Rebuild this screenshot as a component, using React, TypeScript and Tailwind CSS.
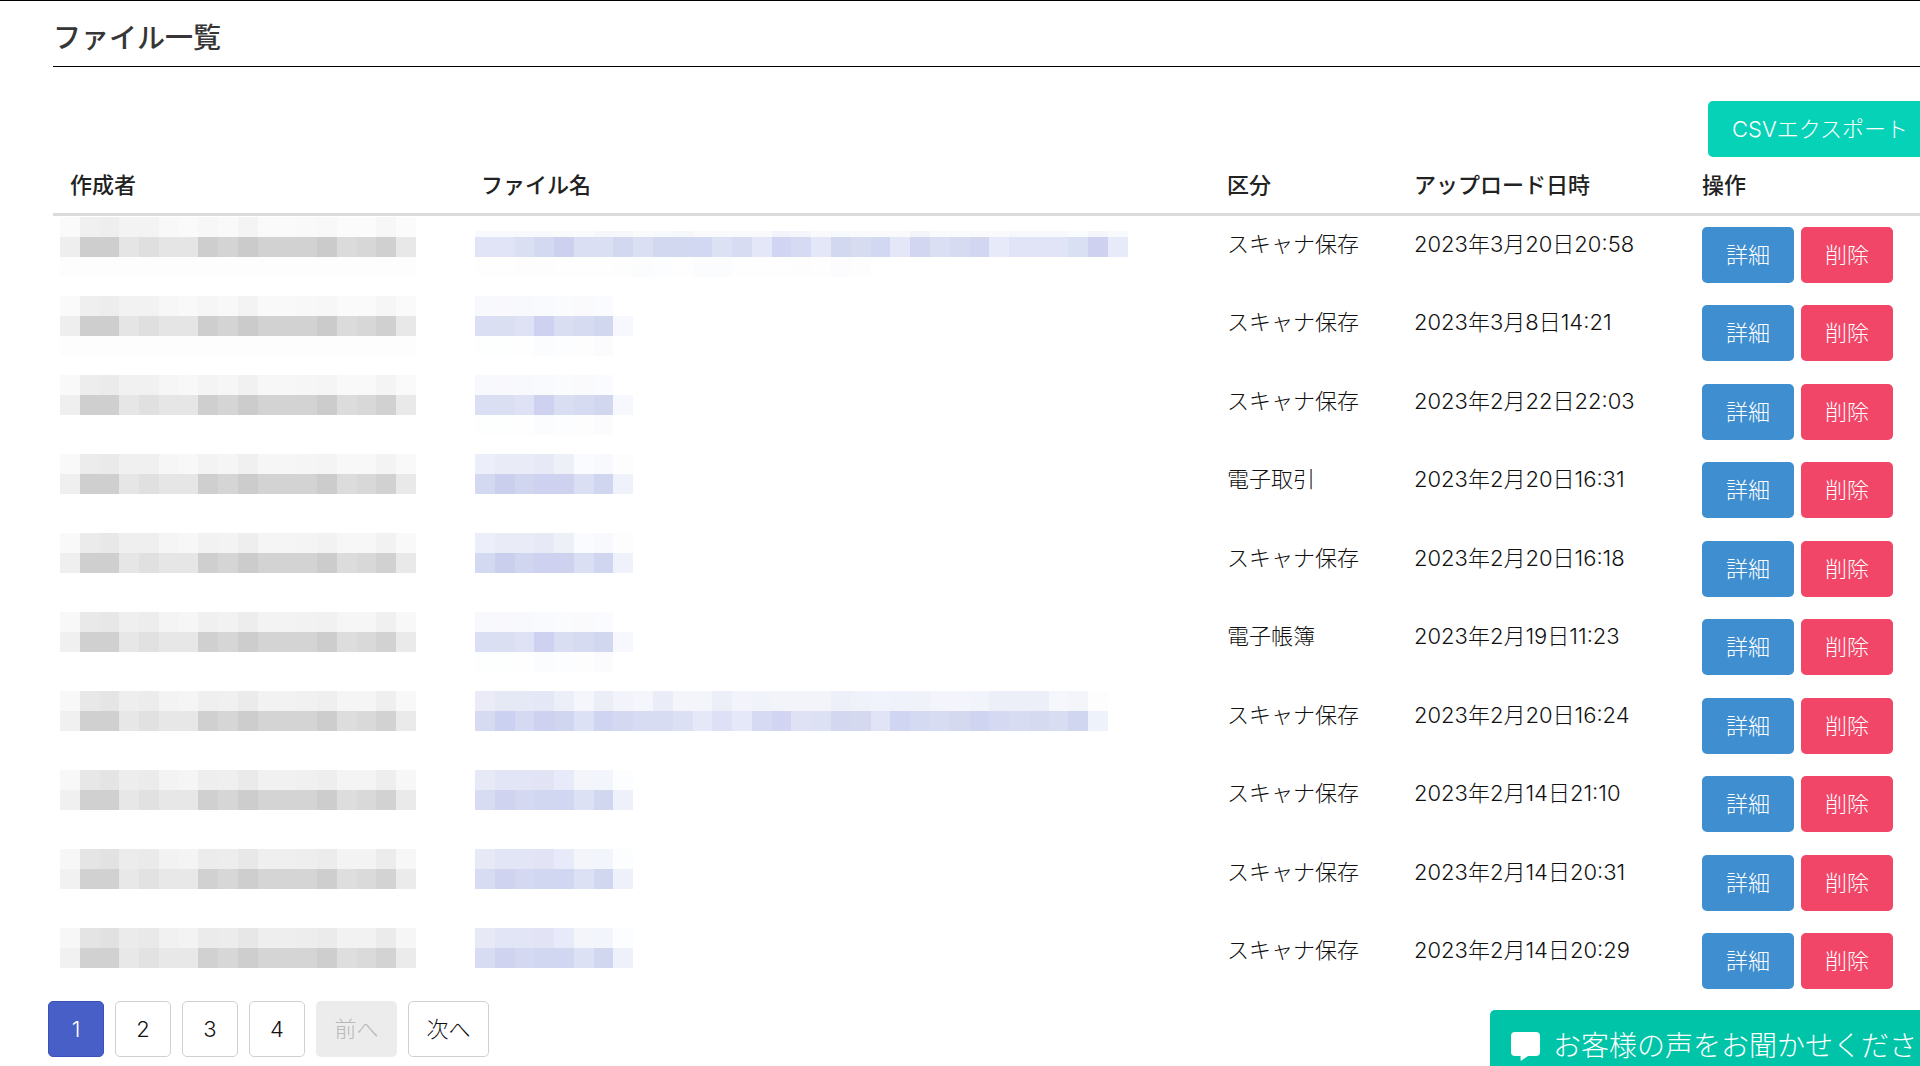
import React from 'react';

type FileRow = {
  kind: string;
  uploadedAt: string;
  name: MaskedText;
};

// Colours of the blocks that hide a value, one list per band of the mosaic
type MaskedText = {
  top: string[];
  main: string[];
  bottom?: string[];
  thinTop?: boolean;
};

const BLOCK_WIDTH = 19.78;
const BLOCK_HEIGHT = 20;

const split = (colors: string) => colors.split(' ').map((c) => '#' + c);

const CREATOR_MAIN = [238, 206, 206, 229, 223, 229, 229, 206, 212, 203, 210, 210, 210, 203, 219, 215, 208, 232];
const CREATOR_TOP_FIRST = [250, 240, 238, 243, 243, 248, 250, 247, 249, 244, 250, 250, 249, 248, 251, 251, 247, 251];
const CREATOR_TOP_LAST = [247, 228, 225, 235, 233, 241, 243, 235, 236, 231, 238, 238, 237, 235, 242, 242, 235, 246];

const LONG_NAME_A: MaskedText = {
  thinTop: true,
  top: split('f8f9fd f8f9fd f8f9fd f8f9fd fafafd fafafd f6f7fb f6f7fb fafafd f8f9fd f6f7fb fafafd fafafd f8f9fb fafafd f3f4fb f5f6fb fafafd f8f9fb fafafd fafafd fafafd f3f4fa fafafd fafafd fafafd fafafd f7f8fb f7f8fb f7f8fb fafbfd f5f6fb f8f9fd'),
  main: split(
    'e0e4f6 e0e4f6 dadff2 d4d9f2 cdd1ef dadff3 dadff3 d3d8f1 dadff3 d3d8f1 d3d8f1 d3d8f2 dce1f4 d7dcf2 e4e7f8 d1d5f1 d6daf2 e4e7f7 d3d8f1 d7dcf1 d3d8f2 e4e7f7 d2d6f1 dadff3 d6dbf1 d2d6f1 e7eaf8 e0e4f6 e0e4f6 e0e4f6 dae0f3 ced2f0 e7eaf8'
  ),
  bottom: split('fefefe fefefe fdfdfe fdfdfe fefefe fefefe fefefe fdfdfe fbfcfe fcfdfe fefefe fbfcfe fbfcfe fefefe fefefe fefefe fdfdfe fefefe fcfcfe fdfdfe'),
};

const LONG_NAME_B: MaskedText = {
  top: split(
    'eaebf7 e5e8f5 e5e8f5 e4e7f5 edeff8 f5f6fb ebeef7 f3f4fb f5f6fb eaedf8 f4f5fa f4f5fa eceef8 f3f4fb f1f3fa f2f4fa f2f4fa f2f4fa eef0f9 f0f2fa f0f3fb eff2fa f0f2fa f4f5fc f4f5fc f2f4fb eceef8 eceef8 eceef8 f6f7fd f4f5fb fdfdfe'
  ),
  main: split(
    'd7dbf1 cbd1f0 d5d9f1 ced2f0 d0d5f0 dde1f5 cfd4f0 d4d8f1 d8dcf2 d8dcf2 dce0f4 e5e8f6 dee1f5 e5e8f8 d6daf2 d1d5f2 dfe2f5 dde1f4 d3d7f0 d5d9f0 e0e4f6 d0d5f1 d5daf3 d8dcf3 d5d9f0 cfd4f0 d5d9f1 d8dcf3 d6daf1 d9ddf2 d0d5f0 eef2fa'
  ),
};

const SHORT_NAME_A: MaskedText = {
  top: split('f8f9fd f9f9fd f8f9fd f9fafd fafbfd fafafd fafbfe'),
  main: split('dadff3 dadff2 dfe2f5 ced2f0 dadef2 d6dbf1 d2d7f0 f7f8fd'),
  bottom: split('fdfefe fdfefe fefefe fbfcfe fcfdfe fdfdfe fbfbfe'),
};

const SHORT_NAME_B: MaskedText = {
  top: split('eceff9 e9ecf7 e9ecf7 e7eaf6 eef0f8 fafbfe f8f9fd fdfdfe'),
  main: split('d3d9f1 c9cfed d1d6f0 ced1f0 ced2ef dbdff4 d0d6f0 eff1fb'),
};

const SHORT_NAME_C: MaskedText = {
  top: split('e7e9f6 e2e5f5 e2e5f5 e2e4f5 e7eaf8 f4f5fb f2f5fc fcfdfe'),
  main: split('d8dcf2 cfd3f0 d5d8f1 d1d6f1 d1d6f1 dce1f4 d2d7f0 eff1fa'),
};

const FILES: FileRow[] = [
  { kind: 'スキャナ保存', uploadedAt: '2023年3月20日20:58', name: LONG_NAME_A },
  { kind: 'スキャナ保存', uploadedAt: '2023年3月8日14:21', name: SHORT_NAME_A },
  { kind: 'スキャナ保存', uploadedAt: '2023年2月22日22:03', name: SHORT_NAME_A },
  { kind: '電子取引', uploadedAt: '2023年2月20日16:31', name: SHORT_NAME_B },
  { kind: 'スキャナ保存', uploadedAt: '2023年2月20日16:18', name: SHORT_NAME_B },
  { kind: '電子帳簿', uploadedAt: '2023年2月19日11:23', name: SHORT_NAME_A },
  { kind: 'スキャナ保存', uploadedAt: '2023年2月20日16:24', name: LONG_NAME_B },
  { kind: 'スキャナ保存', uploadedAt: '2023年2月14日21:10', name: SHORT_NAME_C },
  { kind: 'スキャナ保存', uploadedAt: '2023年2月14日20:31', name: SHORT_NAME_C },
  { kind: 'スキャナ保存', uploadedAt: '2023年2月14日20:29', name: SHORT_NAME_C },
];

function creatorMask(index: number): MaskedText {
  const t = index / (FILES.length - 1);
  const gray = (v: number) => `rgb(${v}, ${v}, ${v})`;
  return {
    top: CREATOR_TOP_FIRST.map((v, i) => gray(Math.round(v + (CREATOR_TOP_LAST[i] - v) * t))),
    main: CREATOR_MAIN.map((v) => gray(Math.round(v + 3 * t))),
    bottom: index < 2 ? CREATOR_MAIN.map(() => gray(253)) : undefined,
  };
}

function Mosaic({ mask, index, label }: { mask: MaskedText; index: number; label: string }) {
  const shift = Math.round(index / 2);
  const bands = [
    { colors: mask.top, y: mask.thinTop ? 14 : 0, height: mask.thinTop ? 6 : BLOCK_HEIGHT },
    { colors: mask.main, y: BLOCK_HEIGHT, height: BLOCK_HEIGHT },
    { colors: mask.bottom ?? [], y: BLOCK_HEIGHT * 2, height: BLOCK_HEIGHT },
  ];
  return (
    <svg
      role="img"
      aria-label={label}
      width={mask.main.length * BLOCK_WIDTH}
      height={66}
      shapeRendering="crispEdges"
      className="block"
    >
      {bands.map((band, b) =>
        band.colors.map((fill, i) => (
          <rect
            key={`${b}-${i}`}
            x={i * BLOCK_WIDTH}
            y={band.y + shift}
            width={BLOCK_WIDTH}
            height={band.height}
            fill={fill}
          />
        ))
      )}
    </svg>
  );
}

function FileTable() {
  return (
    <table className="w-full table-fixed border-separate border-spacing-0 text-left">
      <colgroup>
        <col className="w-[411px]" />
        <col />
        <col className="w-[187px]" />
        <col className="w-[288px]" />
        <col className="w-[235px]" />
      </colgroup>
      <thead>
        <tr>
          {['作成者', 'ファイル名', '区分', 'アップロード日時', '操作'].map((title) => (
            <th
              key={title}
              scope="col"
              className="border-b-3 border-[#dbdbdb] px-[17px] pt-3 pb-[11px] font-medium text-[#222]"
            >
              {title}
            </th>
          ))}
        </tr>
      </thead>
      <tbody>
        {FILES.map((file, i) => (
          <tr key={i} className="align-top odd:h-[78px] even:h-[79px]">
            <td className="pt-px pl-[7px]">
              <Mosaic mask={creatorMask(i)} index={i} label="作成者" />
            </td>
            <td className="pt-px pl-[11px]">
              <Mosaic mask={file.name} index={i} label="ファイル名" />
            </td>
            <td className="px-[17px] pt-3 whitespace-nowrap">{file.kind}</td>
            <td className="px-[17px] pt-3 whitespace-nowrap">{file.uploadedAt}</td>
            <td className="pt-[11px] pl-[17px]">
              <div className="flex gap-[7px]">
                <button type="button" className="h-14 w-[92px] rounded-[5px] bg-[#3e8ed0] text-white">
                  詳細
                </button>
                <button type="button" className="h-14 w-[92px] rounded-[5px] bg-[#f14668] text-white">
                  削除
                </button>
              </div>
            </td>
          </tr>
        ))}
      </tbody>
    </table>
  );
}

function Pagination() {
  return (
    <nav aria-label="ページ" className="-ml-[5px] flex gap-[11px]">
      <button
        type="button"
        aria-current="page"
        className="h-14 w-14 rounded-[5px] border border-[#3a51bb] bg-[#485fc7] text-white"
      >
        1
      </button>
      {[2, 3, 4].map((page) => (
        <button key={page} type="button" className="h-14 w-14 rounded-[5px] border border-[#d0d0d0]">
          {page}
        </button>
      ))}
      <button type="button" disabled className="h-14 w-[81px] rounded-[5px] bg-[#ececec] text-[#b9b9b9]">
        前へ
      </button>
      <button type="button" className="h-14 w-[81px] rounded-[5px] border border-[#d0d0d0]">
        次へ
      </button>
    </nav>
  );
}

function FeedbackButton() {
  return (
    <button
      type="button"
      className="fixed right-0 bottom-0 flex h-14 w-[430px] items-center gap-[13px] rounded-tl-[5px] bg-[#00c4a7] pt-4 pl-[21px] text-[28px] whitespace-nowrap text-white"
    >
      <svg width="29" height="29" viewBox="0 0 29 29" fill="currentColor" aria-hidden="true" className="shrink-0">
        <path d="M4 0H25A4 4 0 0 1 29 4V20A4 4 0 0 1 25 24H17L10.500 28.600Q9.600 29 9.600 28V24H4A4 4 0 0 1 0 20V4A4 4 0 0 1 4 0Z" />
      </svg>
      <span>お客様の声をお聞かせくださ</span>
    </button>
  );
}

export default function App() {
  return (
    <main className="overflow-x-hidden border-t border-black bg-white pl-[53px] font-[Inter,'Noto_Sans_CJK_JP',sans-serif] text-[22px] leading-[33px] font-light text-[#111]">
      <h1 className="border-b border-black pt-4 pb-[7px] text-[28px] leading-[42px] font-medium text-[#363636]">
        ファイル一覧
      </h1>
      <div className="-mr-4 flex justify-end pt-[34px]">
        <button type="button" className="h-14 w-[228px] rounded-[5px] bg-[#05d2b6] pl-6 text-left whitespace-nowrap text-white">
          CSVエクスポート
        </button>
      </div>
      <FileTable />
      <Pagination />
      <FeedbackButton />
    </main>
  );
}
